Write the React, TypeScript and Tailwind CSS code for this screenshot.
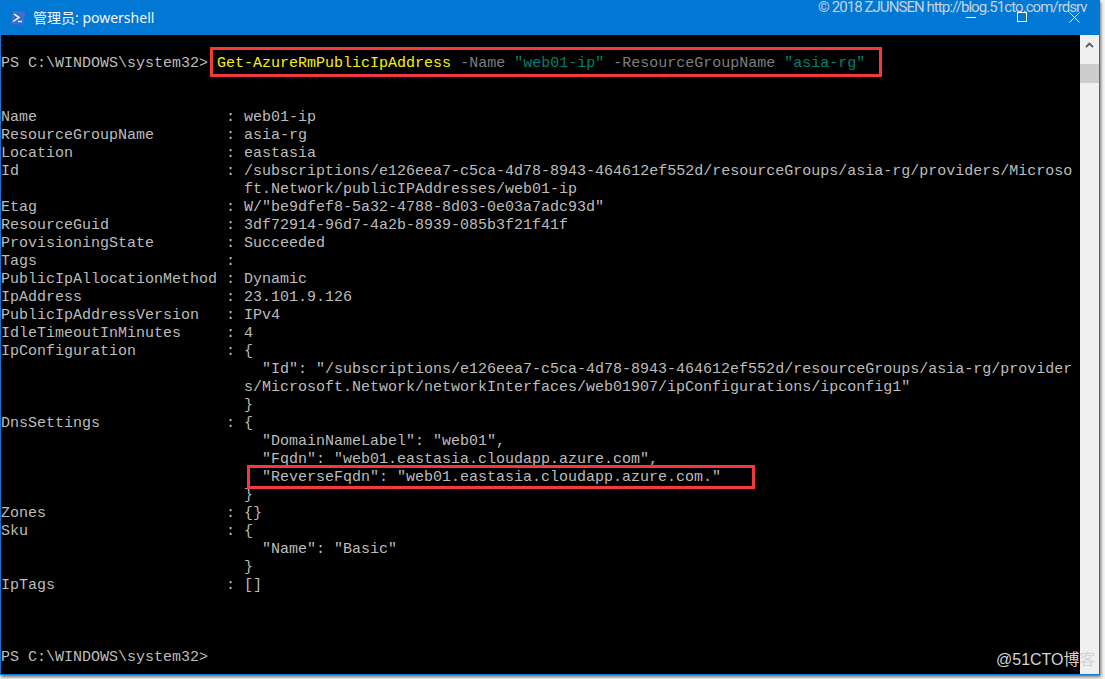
const mono = "font-['Liberation_Mono','Noto_Sans_CJK_SC',monospace]";

const Label = ({ name, value }: { name: string; value?: string }) => (
  <div className="h-[18px]">
    {name.padEnd(25, " ")}: {value}
  </div>
);

const Line = ({ text = "" }: { text?: string }) => <div className="h-[18px]">{text}</div>;

const Indent = ({ text }: { text: string }) => <div className="h-[18px]">{" ".repeat(27) + text}</div>;

const App = () => {
  return (
    <div className="relative w-[1105px] h-[679px] overflow-hidden bg-[#f4f4f4]">
      <div className="flex flex-col w-[1100px] h-[675px] border-x border-b border-[#0a78d4] shadow-[1px_2px_3px_rgba(0,0,0,0.55)]">
        {/* Title bar */}
        <div className="flex items-center h-[35px] shrink-0 -mx-px bg-[#0078d4] text-[#f1f6fb]">
          <svg width="16" height="14" viewBox="0 0 16 14" className="ml-[10px]">
            <path d="M3 0.5h12.5l-2.5 13H0.5z" fill="#3f6fc9" />
            <path d="M4 3l5 3.5-6 4" fill="none" stroke="#fff" strokeWidth="1.4" />
            <path d="M8 10.5h4" stroke="#fff" strokeWidth="1.2" />
          </svg>
          <span className="ml-[7px] text-[14px] font-['Noto_Sans','Noto_Sans_CJK_SC',sans-serif]">管理员: powershell</span>
        </div>

        <div className="flex flex-1 min-h-0">
          {/* Console output */}
          <div className={`flex-1 bg-black pt-[2px] text-[15px] leading-[18px] text-[#bcbcbc] whitespace-pre overflow-hidden ${mono}`}>
            <Line />
            <div className="h-[18px]">
              <span>PS C:\WINDOWS\system32{">"} </span>
              <span className="text-[#f4f400]">Get-AzureRmPublicIpAddress</span>
              <span className="text-[#7d7d7d]"> -Name </span>
              <span className="text-[#00806f]">"web01-ip"</span>
              <span className="text-[#7d7d7d]"> -ResourceGroupName </span>
              <span className="text-[#00806f]">"asia-rg"</span>
            </div>
            <Line />
            <Line />
            <Label name="Name" value="web01-ip" />
            <Label name="ResourceGroupName" value="asia-rg" />
            <Label name="Location" value="eastasia" />
            <Label name="Id" value="/subscriptions/e126eea7-c5ca-4d78-8943-464612ef552d/resourceGroups/asia-rg/providers/Microso" />
            <Indent text="ft.Network/publicIPAddresses/web01-ip" />
            <Label name="Etag" value={'W/"be9dfef8-5a32-4788-8d03-0e03a7adc93d"'} />
            <Label name="ResourceGuid" value="3df72914-96d7-4a2b-8939-085b3f21f41f" />
            <Label name="ProvisioningState" value="Succeeded" />
            <Label name="Tags" />
            <Label name="PublicIpAllocationMethod" value="Dynamic" />
            <Label name="IpAddress" value="23.101.9.126" />
            <Label name="PublicIpAddressVersion" value="IPv4" />
            <Label name="IdleTimeoutInMinutes" value="4" />
            <Label name="IpConfiguration" value="{" />
            <Indent text={'  "Id": "/subscriptions/e126eea7-c5ca-4d78-8943-464612ef552d/resourceGroups/asia-rg/provider'} />
            <Indent text={'s/Microsoft.Network/networkInterfaces/web01907/ipConfigurations/ipconfig1"'} />
            <Indent text="}" />
            <Label name="DnsSettings" value="{" />
            <Indent text={'  "DomainNameLabel": "web01",'} />
            <Indent text={'  "Fqdn": "web01.eastasia.cloudapp.azure.com",'} />
            <Indent text={'  "ReverseFqdn": "web01.eastasia.cloudapp.azure.com."'} />
            <Indent text="}" />
            <Label name="Zones" value="{}" />
            <Label name="Sku" value="{" />
            <Indent text={'  "Name": "Basic"'} />
            <Indent text="}" />
            <Label name="IpTags" value="[]" />
            <Line />
            <Line />
            <Line />
            <Line text={"PS C:\\WINDOWS\\system32>"} />
          </div>

          {/* Scrollbar */}
          <div className="flex flex-col items-center w-[19px] shrink-0 bg-[#f0f0f0]">
            <svg width="9" height="6" viewBox="0 0 9 6" className="mt-[7px]">
              <path d="M1 5l3.5-3.5L8 5" fill="none" stroke="#5c5c5c" strokeWidth="1.8" />
            </svg>
            <div className="mt-[16px] w-full h-[19px] bg-[#cdcdcd]" />
          </div>
        </div>
      </div>

      {/* Window buttons */}
      <div className="absolute left-[966px] top-[17px] w-[10px] h-px bg-white" />
      <div className="absolute left-[1017px] top-[12px] w-[10px] h-[10px] border border-white" />
      <svg width="11" height="11" viewBox="0 0 11 11" className="absolute left-[1069px] top-[12px]">
        <path d="M0.5 0.5l10 10M10.5 0.5l-10 10" stroke="#fff" strokeWidth="1" />
      </svg>

      {/* Annotation boxes */}
      <div className="absolute left-[210px] top-[47px] w-[672px] h-[30px] border-[3px] border-[#f4383c]" />
      <div className="absolute left-[247px] top-[465px] w-[508px] h-[24px] border-[3px] border-[#f4383c]" />

      {/* Watermarks */}
      <div className="absolute left-[818px] top-0 text-[15px] leading-[14px] tracking-[-0.93px] text-[#c6d3df] whitespace-nowrap font-['Roboto',sans-serif]">
        © 2018 ZJUNSEN http://blog.51cto.com/rdsrv
      </div>
      <div className="absolute left-[996px] top-[650px] text-[16px] leading-[20px] text-[#d4d4d4] whitespace-nowrap font-['Liberation_Sans','Noto_Sans_CJK_SC',sans-serif]">
        @51CTO博客
      </div>
    </div>
  );
};

export default App;
